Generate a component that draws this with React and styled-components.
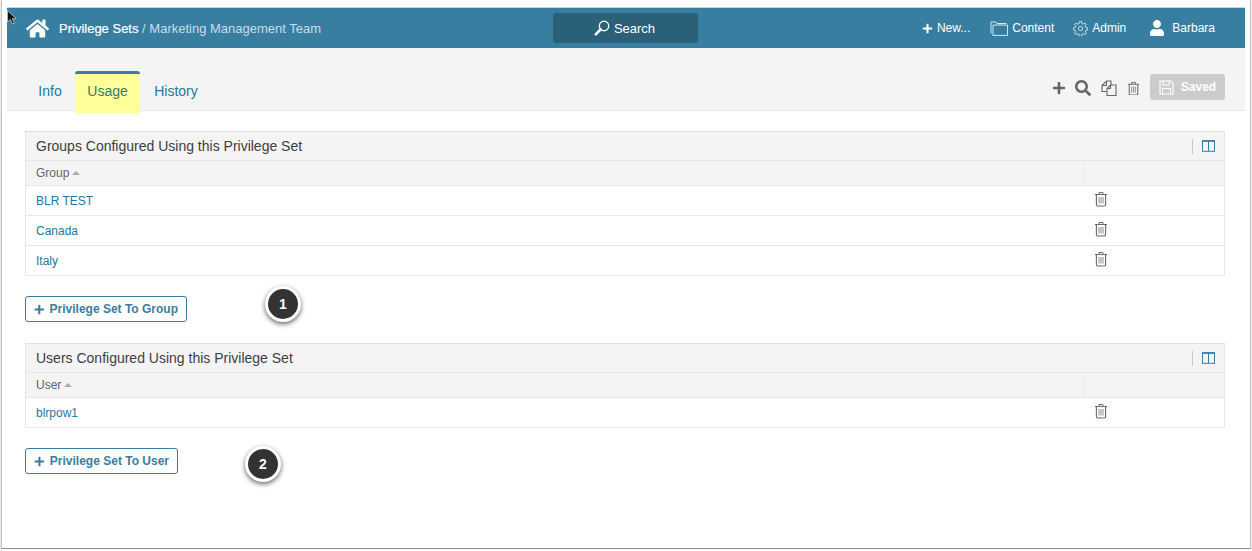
import React from 'react';
import styled, { createGlobalStyle } from 'styled-components';
import { FaHome, FaPlus, FaSearch, FaUser } from 'react-icons/fa';

const GlobalStyle = createGlobalStyle`
  html, body { margin: 0; padding: 0; background: #fff; }
  body { font-family: "Liberation Sans", Arial, sans-serif; color: #444; }
`;

const TEAL = '#387ea0';
const LINK = '#23789f';

const groups = ['BLR TEST', 'Canada', 'Italy'];
const users = ['blrpow1'];

const TrashIcon = ({ size = 14 }) => (
  <svg width={size} height={size * 1.15} viewBox="0 0 14 16" fill="none" stroke="currentColor">
    <path d="M1 3.5h12M5 3.5V1.5h4v2" strokeWidth="1" />
    <path d="M2.4 3.5v10.3c0 .7.5 1.2 1.2 1.2h6.8c.7 0 1.2-.5 1.2-1.2V3.5" strokeWidth="1.1" />
    <path d="M5 6v6.5M7 6v6.5M9 6v6.5" strokeWidth="1" opacity="0.75" />
  </svg>
);

const FolderIcon = () => (
  <svg width="18" height="15" viewBox="0 0 18 15" fill="none" stroke="currentColor" strokeWidth="0.8">
    <path d="M1 12.5V1h5l1 1.5h9.5" />
    <path d="M3 14.4V4h14.5v10.4z" />
  </svg>
);

const GearIcon = () => (
  <svg width="15" height="15" viewBox="0 0 24 24" fill="none" stroke="currentColor" strokeWidth="1.2">
    <circle cx="12" cy="12" r="3.4" />
    <path d="M10.4 1.5h3.2l.6 3 2.3 1 2.6-1.700 2.200 2.300-1.700 2.500 1 2.400 3 .6v3.200l-3 .6-1 2.300 1.700 2.600-2.200 2.200-2.600-1.700-2.300 1-.6 3h-3.200l-.6-3-2.300-1-2.600 1.700-2.200-2.200 1.700-2.600-1-2.300-3-.6v-3.200l3-.6 1-2.400-1.700-2.500 2.200-2.300 2.600 1.700 2.300-1z" transform="translate(0 -.5)" />
  </svg>
);

const CopyIcon = () => (
  <svg width="16" height="16" viewBox="0 0 16 16" fill="none" stroke="currentColor" strokeWidth="1.1">
    <path d="M5.500 11.500H1V5.500L5.500 1H10v4" />
    <path d="M5.500 1v4.500H1" />
    <path d="M6 8.500L9.500 5H15v10.500H6z" />
    <path d="M9.500 5v3.500H6" />
  </svg>
);

const FloppyIcon = () => (
  <svg width="15" height="15" viewBox="0 0 15 15" fill="none" stroke="currentColor" strokeWidth="1.1">
    <path d="M1 1h10.500L14 3.500V14H1z" />
    <path d="M4 1v4h6V1M3.500 14V8.500h8V14" />
  </svg>
);

const ColumnsIcon = () => (
  <svg width="13" height="12" viewBox="0 0 13 12" fill="none" stroke={TEAL}>
    <rect x="0.5" y="0.7" width="12" height="10.600" strokeWidth="1" />
    <path d="M0.500 1h12" strokeWidth="1.600" />
    <path d="M6.500 1v10" strokeWidth="1" />
  </svg>
);

const CursorIcon = () => (
  <svg width="10" height="15" viewBox="0 0 10 15">
    <path d="M0.500 0.500v11.500l2.800-2.600 2 4.600 2-.9-2-4.400h3.900z" fill="#111" stroke="#fff" strokeWidth="0.600" />
  </svg>
);

// handle goes to the lower left, unlike the usual magnifier icons
const NavSearchIcon = () => (
  <svg width="16" height="16" viewBox="0 0 16 16" fill="none" stroke="currentColor">
    <circle cx="10" cy="6" r="4.700" strokeWidth="1.400" />
    <path d="M6.500 9.500L1.800 14.300" strokeWidth="2.600" strokeLinecap="round" />
  </svg>
);

const Screen = styled.div`
  position: relative;
  box-sizing: border-box;
  width: 1250px;
  height: 549px;
  margin-left: 1px;
  padding: 7px 5px 0;
  background: #fff;
  border-left: 1px solid #c2c2c2;
  border-right: 1px solid #c2c2c2;
  border-bottom: 1px solid #8c8c8c;
  box-shadow: 0 1px 2px rgba(0, 0, 0, 0.25);
`;

const Cursor = styled.span`
  position: absolute;
  left: 5px;
  top: 10px;
  line-height: 0;
`;

const Header = styled.header`
  box-sizing: border-box;
  height: 41px;
  display: grid;
  grid-template-columns: 546px 145px 1fr;
  align-items: center;
  background: ${TEAL};
  border-top: 1px solid #c9d3d8;
  color: #fff;
`;

const Crumbs = styled.div`
  display: flex;
  align-items: center;
  padding-left: 19px;
  font-size: 13px;
`;

const HomeLink = styled.span`
  display: flex;
  margin-right: 10px;
  font-size: 23px;
`;

const CrumbStrong = styled.b`
  font-weight: 400;
  color: #fff;
  -webkit-text-stroke: 0.2px #fff;
`;

const CrumbMuted = styled.span`
  color: #c8dde7;
  white-space: pre;
`;

const SearchBox = styled.div`
  height: 30px;
  display: flex;
  align-items: center;
  justify-content: center;
  gap: 4px;
  padding-right: 2px;
  background: #2b6079;
  border-radius: 3px;
  font-size: 13px;
`;

const NavMenu = styled.nav`
  display: flex;
  justify-content: flex-end;
  align-items: center;
  padding-right: 30px;
  font-size: 12px;
`;

const NavItem = styled.span`
  display: flex;
  align-items: center;
  gap: ${({ $gap }) => $gap || 4}px;
  margin-left: ${({ $left }) => $left || 19}px;
`;

const SubBar = styled.div`
  box-sizing: border-box;
  height: 63px;
  display: flex;
  justify-content: space-between;
  padding: 23px 20px 0 18px;
  background: #f4f4f4;
  border-bottom: 1px solid #e8e8e8;
`;

const Tabs = styled.div`
  display: flex;
  height: 42px;
`;

const Tab = styled.span`
  box-sizing: border-box;
  display: flex;
  align-items: center;
  justify-content: center;
  width: ${({ $w }) => $w}px;
  height: 42px;
  padding-bottom: 2px;
  font-size: 14px;
  color: ${LINK};
  ${({ $active }) =>
    $active &&
    `
    background: #ffff99;
    border-top: 3px solid ${TEAL};
    border-radius: 3px 3px 0 0;
    color: #35796f;
    padding-bottom: 5px;
  `}
`;

const Actions = styled.div`
  display: flex;
  align-items: flex-start;
  color: #666;
`;

const ActionIcon = styled.span`
  display: flex;
  align-items: center;
  height: 30px;
  margin-left: ${({ $left }) => $left || 0}px;
  margin-top: 2px;
  font-size: ${({ $size }) => $size || 14}px;
`;

const SavedButton = styled.span`
  box-sizing: border-box;
  width: 75px;
  height: 26px;
  display: flex;
  align-items: center;
  justify-content: center;
  gap: 7px;
  margin-left: 10px;
  margin-top: 3px;
  background: #ccc;
  border-radius: 3px;
  color: #fff;
  font-size: 12px;
  font-weight: 700;
`;

const Content = styled.main`
  padding: 20px 20px 0 18px;
`;

const Panel = styled.section`
  border: 1px solid #e6e6e6;
  border-top-color: #e0e0e0;
  margin-bottom: 20px;
`;

const PanelTitle = styled.div`
  box-sizing: border-box;
  height: 29px;
  display: flex;
  align-items: center;
  justify-content: space-between;
  padding: 0 9px 0 10px;
  background: #f4f4f4;
  border-bottom: 1px solid #e6e6e6;
  font-size: 14px;
  color: #3d3d3d;
`;

const ColumnToggle = styled.span`
  display: flex;
  align-items: center;
  height: 15px;
  padding-left: 9px;
  border-left: 1px solid #c8c8c8;
`;

const HeadRow = styled.div`
  box-sizing: border-box;
  height: 25px;
  display: grid;
  grid-template-columns: 1fr 139px;
  background: #f4f4f4;
  border-bottom: 1px solid #e6e6e6;
  font-size: 12px;
  color: #666;
`;

const HeadCell = styled.span`
  display: flex;
  align-items: center;
  gap: 3px;
  padding-left: 10px;
  border-right: 1px solid #ececec;
`;

const SortArrow = styled.i`
  width: 0;
  height: 0;
  border-left: 4px solid transparent;
  border-right: 4px solid transparent;
  border-bottom: 4px solid #aaa;
`;

const Row = styled.div`
  box-sizing: border-box;
  height: 30px;
  display: grid;
  grid-template-columns: 1fr 139px;
  align-items: center;
  border-bottom: 1px solid #e6e6e6;
  font-size: 12px;
  &:last-child { height: 29px; border-bottom: 0; }
`;

const RowLink = styled.a`
  padding-left: 10px;
  color: ${LINK};
`;

const RowTrash = styled.span`
  display: flex;
  padding-left: 9px;
  margin-top: -2px;
  color: #666;
`;

const ButtonRow = styled.div`
  position: relative;
  height: 26px;
  margin-bottom: ${({ $mb }) => $mb || 0}px;
`;

const AddButton = styled.button`
  box-sizing: border-box;
  display: inline-flex;
  align-items: center;
  gap: 5px;
  height: 26px;
  padding: 0 8px;
  width: ${({ $w }) => $w}px;
  background: #fff;
  border: 1px solid ${TEAL};
  border-radius: 3px;
  color: ${TEAL};
  font-family: inherit;
  font-size: 12px;
  font-weight: 700;
  white-space: nowrap;
`;

const Badge = styled.span`
  position: absolute;
  left: ${({ $x }) => $x}px;
  top: ${({ $y }) => $y}px;
  box-sizing: border-box;
  width: 36px;
  height: 36px;
  display: flex;
  align-items: center;
  justify-content: center;
  background: #333;
  border: 3px solid #fff;
  border-radius: 50%;
  box-shadow: 0 2px 5px rgba(0, 0, 0, 0.6);
  color: #fff;
  font-size: 14px;
  font-weight: 700;
`;

const Table = ({ title, column, rows }) => (
  <Panel>
    <PanelTitle>
      {title}
      <ColumnToggle><ColumnsIcon /></ColumnToggle>
    </PanelTitle>
    <HeadRow>
      <HeadCell>{column} <SortArrow /></HeadCell>
      <span />
    </HeadRow>
    {rows.map((name) => (
      <Row key={name}>
        <RowLink>{name}</RowLink>
        <RowTrash><TrashIcon /></RowTrash>
      </Row>
    ))}
  </Panel>
);

export default function App() {
  return (
    <Screen>
      <GlobalStyle />
      <Cursor><CursorIcon /></Cursor>
      <Header>
        <Crumbs>
          <HomeLink><FaHome /></HomeLink>
          <CrumbStrong>Privilege Sets</CrumbStrong>
          <CrumbMuted> / Marketing Management Team</CrumbMuted>
        </Crumbs>
        <SearchBox>
          <NavSearchIcon />
          Search
        </SearchBox>
        <NavMenu>
          <NavItem $gap={4}><FaPlus size={11} />New...</NavItem>
          <NavItem $left={20}><FolderIcon />Content</NavItem>
          <NavItem><GearIcon />Admin</NavItem>
          <NavItem $gap={7} $left={23}><FaUser size={16} />Barbara</NavItem>
        </NavMenu>
      </Header>
      <SubBar>
        <Tabs>
          <Tab $w={50}>Info</Tab>
          <Tab $w={65} $active>Usage</Tab>
          <Tab $w={72}>History</Tab>
        </Tabs>
        <Actions>
          <ActionIcon $size={14}><FaPlus /></ActionIcon>
          <ActionIcon $left={9} $size={16}><FaSearch /></ActionIcon>
          <ActionIcon $left={10}><CopyIcon /></ActionIcon>
          <ActionIcon $left={10}><TrashIcon size={13} /></ActionIcon>
          <SavedButton><FloppyIcon />Saved</SavedButton>
        </Actions>
      </SubBar>
      <Content>
        <Table title="Groups Configured Using this Privilege Set" column="Group" rows={groups} />
        <ButtonRow $mb={21}>
          <AddButton $w={162}><FaPlus size={11} />Privilege Set To Group</AddButton>
          <Badge $x={240} $y={-10}>1</Badge>
        </ButtonRow>
        <Table title="Users Configured Using this Privilege Set" column="User" rows={users} />
        <ButtonRow>
          <AddButton $w={153}><FaPlus size={11} />Privilege Set To User</AddButton>
          <Badge $x={220} $y={-2}>2</Badge>
        </ButtonRow>
      </Content>
    </Screen>
  );
}
